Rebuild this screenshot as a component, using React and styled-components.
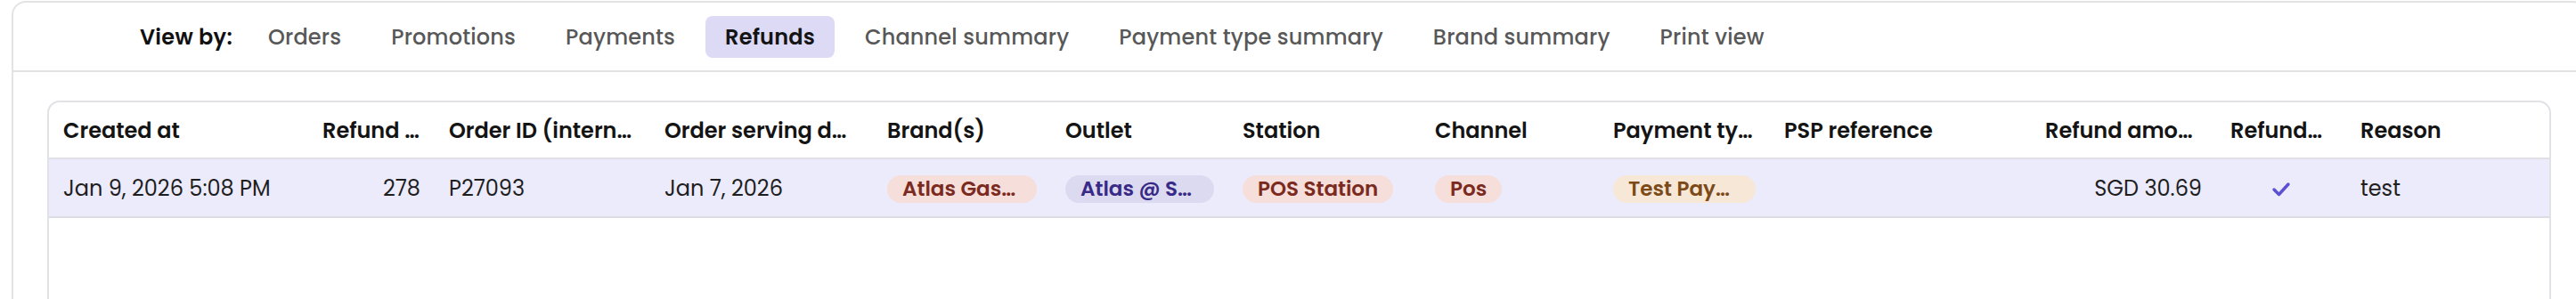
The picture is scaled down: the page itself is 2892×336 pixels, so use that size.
import styled, { createGlobalStyle } from 'styled-components';

const GlobalStyle = createGlobalStyle`
body{
  margin:0;
  background:#ffffff;
  overflow:hidden;
  font-family:"Poppins","Inter","Noto Sans",sans-serif;
}
`;

const Card = styled.div`
margin:1px 0 0 13px;
width:2891px;
height:420px;
box-sizing:border-box;
border:2px solid #e3e3e3;
border-radius:16px;
background:#fff;
`;

const TabBar = styled.div`
display:flex;
align-items:center;
gap:12px;
height:76px;
padding-left:142px;
border-bottom:2px solid #e2e2e2;
`;

const ViewLabel = styled.span`
font-size:24px;
font-weight:600;
color:#111;
margin-right:6px;
letter-spacing:0.3px;
`;

const Tab = styled.div`
height:47px;
display:flex;
align-items:center;
padding:0 22px;
border-radius:8px;
font-size:24px;
letter-spacing:0.18px;
font-weight:${p => (p.active ? 600 : 500)};
color:${p => (p.active ? '#141414' : '#585858')};
background:${p => (p.active ? '#dddaf6' : 'transparent')};
`;

const Content = styled.div`
padding:32px 38px 0 38px;
`;

const TableCard = styled.div`
border:2px solid #e2e2e6;
border-radius:14px;
overflow:hidden;
height:300px;
`;

const Table = styled.table`
width:100%;
table-layout:fixed;
border-collapse:collapse;
`;

const Th = styled.th`
height:62px;
padding:0 16px;
text-align:${p => p.align || 'left'};
font-size:24px;
font-weight:600;
color:#141414;
white-space:nowrap;
overflow:hidden;
text-overflow:ellipsis;
border-bottom:2px solid #e0e0e6;
`;

const Row = styled.tr`
background:#ecebfb;
border-bottom:2px solid #dcdce4;
`;

const Td = styled.td`
height:64px;
padding:0 16px;
text-align:${p => p.align || 'left'};
font-size:24px;
font-weight:400;
color:#1e1e1e;
white-space:nowrap;
overflow:hidden;
text-overflow:ellipsis;
`;

const tones = {
  red: { bg: '#f6dedb', fg: '#7b2a20' },
  purple: { bg: '#dcdaf0', fg: '#382a86' },
  amber: { bg: '#f6e7d6', fg: '#7b4a18' },
};

const Pill = styled.span`
display:inline-block;
max-width:100%;
box-sizing:border-box;
height:31px;
line-height:31px;
padding:0 17px;
border-radius:16px;
font-size:23px;
font-weight:600;
background:${p => tones[p.tone].bg};
color:${p => tones[p.tone].fg};
white-space:nowrap;
overflow:hidden;
text-overflow:ellipsis;
vertical-align:middle;
`;

const Check = () => (
  <svg width="22" height="18" viewBox="0 0 22 18" style={{ verticalAlign: 'middle' }}>
    <polyline points="3,9 8.5,14.5 19,3" fill="none" stroke="#5b4fd4" strokeWidth="3.4" strokeLinecap="round" strokeLinejoin="round" />
  </svg>
);

const tabs = ['Orders', 'Promotions', 'Payments', 'Refunds', 'Channel summary', 'Payment type summary', 'Brand summary', 'Print view'];

const columns = [
  { title: 'Created at', w: 291 },
  { title: 'Refund ID', w: 142, align: 'right' },
  { title: 'Order ID (internal)', w: 242 },
  { title: 'Order serving date', w: 250 },
  { title: 'Brand(s)', w: 200 },
  { title: 'Outlet', w: 199 },
  { title: 'Station', w: 216 },
  { title: 'Channel', w: 200 },
  { title: 'Payment type', w: 192 },
  { title: 'PSP reference', w: 293 },
  { title: 'Refund amount', w: 208, align: 'right' },
  { title: 'Refunded', w: 146, align: 'center' },
  { title: 'Reason' },
];

const App = () => {
  return (
    <>
      <GlobalStyle />
      <Card>
        <TabBar>
          <ViewLabel>View by:</ViewLabel>
          {tabs.map(t => (
            <Tab key={t} active={t === 'Refunds'}>{t}</Tab>
          ))}
        </TabBar>
        <Content>
          <TableCard>
            <Table>
              <colgroup>
                {columns.map(c => (
                  <col key={c.title} style={c.w ? { width: c.w } : undefined} />
                ))}
              </colgroup>
              <thead>
                <tr>
                  {columns.map(c => (
                    <Th key={c.title} align={c.align}>{c.title}</Th>
                  ))}
                </tr>
              </thead>
              <tbody>
                <Row>
                  <Td>Jan 9, 2026 5:08 PM</Td>
                  <Td align="right">278</Td>
                  <Td>P27093</Td>
                  <Td>Jan 7, 2026</Td>
                  <Td><Pill tone="red">Atlas Gastrobar</Pill></Td>
                  <Td><Pill tone="purple">Atlas @ Suntec</Pill></Td>
                  <Td><Pill tone="red">POS Station</Pill></Td>
                  <Td><Pill tone="red">Pos</Pill></Td>
                  <Td><Pill tone="amber">Test Payment</Pill></Td>
                  <Td></Td>
                  <Td align="right">SGD 30.69</Td>
                  <Td align="center"><Check /></Td>
                  <Td>test</Td>
                </Row>
              </tbody>
            </Table>
          </TableCard>
        </Content>
      </Card>
    </>
  );
};

export default App;
